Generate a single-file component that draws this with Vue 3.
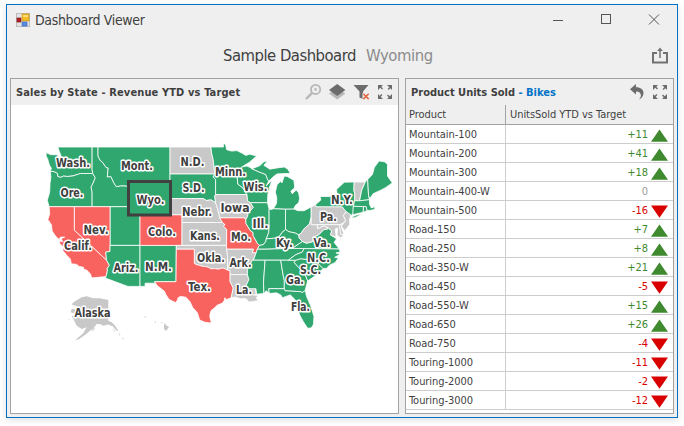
<script setup>
const RAD = Math.PI / 180
const mercator = (lat) => Math.log(Math.tan((45 + lat / 2) * RAD))
const project = (pair) => {
  const [lon, lat] = pair.split(',').map(Number)
  const x = 99 + 6.0 * (lon + 114.05)
  const y = 42 + 342 * (0.9838 - mercator(lat))
  return x.toFixed(1) + ',' + y.toFixed(1)
}

const ORWA = '-123.6,46.25 -123.2,46.15 -122.8,46.0 -122.76,45.66 -122.3,45.55 -121.8,45.7 -121.1,45.65 -120.2,45.72 -119.3,45.93 -118.98,46 -116.92,46'
const flip = (s) => s.split(' ').reverse().join(' ')
const IDMT = '-116.05,49 -116.05,48 -115.7,47.5 -115.3,47.3 -114.7,46.7 -114.35,46.65 -114.5,45.6 -113.9,45.65 -113.4,44.9 -113.0,44.45 -112.3,44.55 -111.5,44.55 -111.05,44.47'
const OKTX = '-94.48,33.64 -95.1,33.9 -95.5,33.9 -96.0,33.75 -96.6,33.85 -97.2,33.8 -97.6,34.0 -98.1,34.13 -98.6,34.15 -99.2,34.3 -99.7,34.4 -100,34.56 -100,36.5 -103,36.5'
const MNWI = '-92.1,46.75 -92.3,46.1 -92.85,45.6 -92.75,44.75 -91.9,44.3 -91.22,43.5'
const IAIL = '-90.64,42.5 -90.15,41.9 -91.05,41.2 -91.1,40.8 -91.4,40.4'
const MOIL = '-91.4,40.4 -91.4,39.9 -90.7,39.0 -90.2,38.7 -90.2,38.3 -89.5,37.3 -89.15,37'
const OHIO_S = '-84.8,39.1 -84.2,38.8 -83.2,38.65 -82.6,38.4'
const KYIN = '-88,37.9 -87.6,37.9 -86.8,37.95 -86,38 -85.4,38.7 -84.8,39.1'
const WVVA = '-77.7,39.32 -77.8,39.15 -78.4,39.1 -79.3,38.4 -79.9,38.2 -80.3,37.5 -81.3,37.3 -81.97,37.53'
const WVOH = '-82.6,38.4 -82.2,38.6 -81.7,39.2 -80.8,39.8 -80.52,40.64'

const source = [
  ['up', `-124.7,48.38 -123.9,48.15 -123.1,48.15 -122.75,48.1 -122.6,47.3 -122.35,47.6 -122.2,48.0 -122.5,48.5 -122.75,49 -117.03,49 -117.04,46.42 -116.92,46 ${flip(ORWA)} -124.05,46.27 -123.8,46.6 -124.1,46.9 -124.3,47.3 -124.4,47.6 -124.7,48.0`],
  ['up', `-124.0,46.2 ${ORWA} -116.5,45.5 -116.85,44.9 -117.2,44.4 -117.03,43.8 -117.03,42 -124.2,42 -124.5,42.8 -124.1,43.8 -124.05,44.8 -123.9,45.6`],
  ['up', `-117.03,49 ${IDMT} -111.05,42 -117.03,42 -117.03,43.8 -117.2,44.4 -116.85,44.9 -116.5,45.5 -116.92,46 -117.04,46.42`],
  ['up', `-104.05,49 -104.05,45 -111.05,45 ${flip(IDMT)}`],
  ['up', '-114.05,42 -111.05,42 -111.05,41 -109.05,41 -109.05,37 -114.05,37'],
  ['down', '-120,42 -114.05,42 -114.05,36.2 -114.75,36.1 -114.63,35 -120,39'],
  ['down', '-124.2,42 -120,42 -120,39 -114.63,35 -114.15,34.3 -114.5,33.9 -114.5,33.4 -114.72,32.72 -117.12,32.53 -117.3,33.1 -117.9,33.6 -118.4,33.75 -118.5,34.03 -119.2,34.15 -119.6,34.42 -120.5,34.5 -120.65,35.15 -121.3,35.7 -121.9,36.3 -121.8,36.8 -122.4,37.2 -122.5,37.6 -121.9,37.5 -122.2,37.9 -121.6,38.1 -122.3,38.1 -122.5,37.8 -123.0,38.1 -123.7,38.9 -123.8,39.7 -124.4,40.4 -124.1,41.1'],
  ['up', '-114.05,37 -109.05,37 -109.05,31.33 -111.07,31.33 -114.81,32.5 -114.72,32.72 -114.5,33.4 -114.5,33.9 -114.15,34.3 -114.63,35 -114.75,36.1 -114.05,36.2'],
  ['up', '-109.05,37 -103,37 -103.05,32 -106.6,32 -106.53,31.78 -108.2,31.78 -108.2,31.33 -109.05,31.33'],
  ['down', '-109.05,41 -102.05,41 -102.05,37 -109.05,37'],
  ['none', '-104.05,49 -97.23,49 -97.1,48.3 -96.85,47.6 -96.56,45.94 -104.05,45.94'],
  ['up', '-104.05,45.94 -96.56,45.94 -96.85,45.6 -96.45,45.3 -96.45,43.5 -96.6,43.3 -96.45,42.5 -97.2,42.85 -98,42.77 -98.5,43 -104.05,43'],
  ['none', '-104.05,43 -98.5,43 -98,42.77 -97.2,42.85 -96.45,42.5 -96.1,41.7 -95.85,41 -95.77,40.59 -95.3,40 -102.05,40 -102.05,41 -104.05,41'],
  ['none', '-102.05,40 -95.3,40 -94.9,39.75 -95.1,39.5 -94.6,39.1 -94.62,37 -102.05,37'],
  ['none', `-103,37 -94.62,37 -94.43,35.4 ${OKTX}`],
  ['down', `-103,36.5 ${flip(OKTX)} -94.04,33.55 -94.04,31.99 -93.5,31.1 -93.7,30.3 -93.85,29.7 -94.7,29.4 -94.9,29.7 -95.0,29.3 -95.3,28.9 -96.2,28.6 -96.5,28.3 -97.2,27.8 -97.4,27.2 -97.4,26.8 -97.15,25.95 -98.2,26.05 -99.1,26.4 -99.5,27.5 -100.3,28.3 -100.7,29.1 -101.4,29.77 -102.3,29.88 -102.7,29.7 -102.8,29.35 -103.15,28.98 -104.2,29.45 -104.7,30.1 -105.0,30.65 -106.2,31.45 -106.6,32 -103.05,32`],
  ['up', `-97.23,49 -95.15,49 -95.15,49.38 -94.8,49.3 -94.6,48.7 -93.8,48.55 -92.9,48.6 -92.0,48.3 -91.4,48.07 -90.8,48.2 -89.6,48.0 -90.8,47.3 ${MNWI} -96.45,43.5 -96.45,45.3 -96.85,45.6 -96.56,45.94 -96.85,47.6 -97.1,48.3`],
  ['none', `-96.45,43.5 -91.22,43.5 -91.1,42.7 ${IAIL} -91.73,40.61 -95.77,40.59 -95.85,41 -96.1,41.7 -96.45,42.5 -96.6,43.3`],
  ['down', `-95.77,40.59 -91.73,40.61 ${MOIL} -89.5,36.5 -89.7,36 -90.37,36 -90.15,36.5 -94.62,36.5 -94.62,37 -94.6,39.1 -95.1,39.5 -94.9,39.75 -95.3,40`],
  ['none', '-94.62,36.5 -90.15,36.5 -90.37,36 -89.7,36 -90.1,35.1 -90.6,34.6 -91.15,33.7 -91.15,33 -94.04,33 -94.04,33.55 -94.48,33.64 -94.43,35.4'],
  ['none', '-94.04,33 -91.15,33 -90.9,32.3 -91.6,31 -89.73,31 -89.8,30.5 -89.6,30.2 -90.2,30.1 -89.3,30 -89.7,29.7 -89.1,29.05 -89.5,29.25 -90.1,29.15 -90.9,29.05 -91.3,29.5 -91.7,29.6 -92.3,29.55 -93.2,29.8 -93.85,29.7 -93.7,30.3 -93.5,31.1 -94.04,31.99'],
  ['up', `-91.2,46.87 -90.7,46.7 -90.4,46.55 -89.1,46.15 -88.1,45.9 -87.8,45.35 -87.6,45.1 -88.0,44.55 -87.05,45.25 -87.5,44.3 -87.75,43.5 -87.8,42.5 -90.64,42.5 -91.1,42.7 ${flip(MNWI)}`],
  ['up', `-87.8,42.5 -87.53,41.7 -87.53,39.35 -87.6,38.7 -88.0,37.9 -88.1,37.5 -88.5,37.1 ${flip(MOIL)} ${flip(IAIL)}`],
  ['up', `-87.53,41.7 -87.1,41.65 -86.8,41.76 -84.8,41.72 ${flip(KYIN)} -87.6,38.7 -87.53,39.35`],
  ['up', `-84.8,41.72 -83.45,41.73 -82.7,41.5 -81.7,41.5 -80.52,41.98 ${flip(WVOH)} ${flip(OHIO_S)}`],
  ['up', '-86.8,41.76 -86.3,42.4 -86.25,43.1 -86.5,43.8 -86.2,44.7 -85.6,45.1 -85.4,44.9 -85,45.7 -84.5,45.65 -83.4,45.2 -83.3,44.6 -83.3,44.3 -83.9,43.9 -83.7,43.6 -83.0,44.05 -82.6,43.7 -82.45,43 -82.6,42.5 -83.1,42.2 -83.45,41.73 -84.8,41.72'],
  ['up', '-90.4,46.55 -89.1,46.9 -88.4,47.35 -87.8,47.45 -88.4,46.95 -87.4,46.5 -86.2,46.65 -85,46.75 -84.4,46.5 -84.0,46.0 -84.9,46.0 -86.2,45.95 -86.7,45.7 -87.6,45.1 -87.8,45.35 -88.1,45.9 -89.1,46.15'],
  ['up', `-89.15,37 -88.5,37.1 -88.1,37.5 ${KYIN} ${OHIO_S} -82.5,37.95 -81.97,37.53 -83.68,36.6 -88.05,36.5 -89.5,36.5`],
  ['up', '-89.5,36.5 -88.05,36.5 -83.68,36.6 -81.68,36.59 -82,36.1 -83.1,35.75 -84.32,35 -90.3,35 -90.1,35.1 -89.7,36'],
  ['up', '-90.3,35 -88.2,35 -88.47,31.9 -88.4,30.3 -89.6,30.2 -89.73,31 -91.6,31 -90.9,32.3 -91.15,33 -91.15,33.7 -90.6,34.6'],
  ['up', '-88.2,35 -85.6,35 -85.18,32.87 -85.0,32.2 -85.0,31 -87.6,31 -87.5,30.3 -88.0,30.7 -88.4,30.3 -88.47,31.9'],
  ['up', '-85.6,35 -83.1,35 -83.35,34.7 -82.6,34.0 -81.5,33.0 -81.1,32.1 -81.4,31.2 -81.5,30.75 -82.05,30.4 -82.2,30.57 -84.86,30.7 -85.0,31 -85.0,32.2 -85.18,32.87'],
  ['up', '-87.6,31 -85,31 -84.86,30.7 -82.2,30.57 -82.05,30.4 -81.5,30.75 -81.3,29.9 -80.6,28.5 -80.05,26.9 -80.15,25.7 -80.5,25.2 -81.1,25.15 -81.8,26.1 -82.3,26.9 -82.75,27.8 -82.65,28.7 -83.3,29.5 -84,30.1 -85.3,29.7 -85.6,30.1 -86.3,30.4 -87.5,30.3'],
  ['up', '-83.1,35 -82.3,35.2 -81.05,35.1 -80.8,34.82 -79.67,34.8 -78.55,33.86 -79.2,33.2 -80.4,32.5 -81.1,32.1 -81.5,33 -82.6,34 -83.35,34.7'],
  ['up', '-84.32,35 -83.1,35.75 -82,36.1 -81.68,36.59 -75.87,36.55 -75.7,36.1 -76.4,36.0 -75.7,35.8 -76.6,35.4 -76.0,35.3 -76.5,34.7 -77.5,34.3 -77.95,33.87 -78.55,33.86 -79.67,34.8 -80.8,34.82 -81.05,35.1 -82.3,35.2 -83.1,35'],
  ['up', `-83.68,36.6 ${flip(WVVA)} -77.1,38.9 -77.3,38.4 -76.3,37.9 -76.7,37.4 -76.3,37 -75.87,36.55`],
  ['none', `${WVOH} -80.52,39.72 -79.48,39.72 -79.48,39.2 -78.4,39.6 ${WVVA} -82.5,37.95`],
  ['none', '-80.52,41.98 -79.76,42.27 -79.76,42 -75.35,42 -74.7,41.36 -75.15,40.9 -74.75,40.2 -75.5,39.8 -75.79,39.72 -80.52,39.72'],
  ['up', '-79.76,42.27 -78.9,42.85 -79.05,43.27 -77.5,43.25 -76.2,43.55 -76.3,44.1 -75.0,44.98 -73.35,45 -73.4,44 -73.25,43.6 -73.27,42.75 -73.5,42.05 -73.5,41.2 -73.9,40.85 -74.7,41.36 -75.35,42 -79.76,42'],
  ['up', '-74,40.6 -73,40.95 -72,41.05 -73.3,40.6'],
  ['none', '-73.35,45 -71.5,45 -72.1,44 -72.45,42.73 -73.27,42.75 -73.25,43.6 -73.4,44'],
  ['up', '-71.5,45 -71.1,45.3 -70.95,43.3 -70.8,42.87 -72.45,42.73 -72.1,44'],
  ['up', '-71.1,45.3 -70.3,45.9 -70.0,46.7 -69.2,47.45 -68.3,47.35 -67.8,47.07 -67.8,45.7 -67,44.9 -68.2,44.3 -69,44 -70.2,43.6 -70.7,43.05 -70.95,43.3'],
  ['up', '-73.27,42.75 -72.45,42.73 -70.8,42.87 -70.8,42.3 -70.5,41.85 -69.9,42.0 -69.95,41.65 -70.6,41.55 -71.2,41.5 -71.38,42.02 -73.5,42.05'],
  ['up', '-73.5,42.05 -71.8,42.02 -71.85,41.32 -73.6,41'],
  ['up', '-71.8,42.02 -71.38,42.02 -71.2,41.5 -71.85,41.32'],
  ['none', '-74.7,41.36 -73.9,41 -74.1,40.45 -74.1,39.75 -74.9,38.95 -75.5,39.5 -75.15,39.9 -74.75,40.2 -75.15,40.9'],
  ['none', '-79.48,39.72 -75.79,39.72 -75.6,38.46 -75.05,38.45 -75.6,38 -76.2,38.4 -76.1,39.3 -76.5,39.2 -76.4,38.4 -76.4,38.1 -77.3,38.4 -77.1,38.9 -77.7,39.32 -78.4,39.6 -79.48,39.2'],
  ['none', '-75.79,39.72 -75.5,39.8 -75.4,39.2 -75.05,38.45 -75.6,38.46'],
  ['none', '-75.3,38 -75.6,37.9 -76.0,37.2'],
  ['up', '-111.05,45 -104.05,45 -104.05,41 -111.05,41'],
]
const states = source.map(([kind, pts]) => ({ kind, points: pts.split(' ').map(project).join(' ') }))

const labels = [
  ['Wash.', 73, 163, 34], ['Mont.', 137, 166, 32], ['N.D.', 192.5, 162, 24], ['Minn.', 230.5, 172, 31],
  ['Ore.', 72, 193, 23], ['Wyo.', 150.5, 200, 28], ['S.D.', 193.5, 188, 22], ['Wis.', 255.5, 187, 24],
  ['Nebr.', 197, 212, 30], ['Iowa', 235, 208, 29], ['Nev.', 96, 229.5, 25], ['Colo.', 162, 232, 28],
  ['Calif.', 78, 246, 28], ['Kans.', 205, 236, 30], ['Mo.', 241, 237, 20], ['Ill.', 260.5, 224, 16],
  ['Ariz.', 126, 268, 25], ['N.M.', 158.5, 267, 27], ['Okla.', 211, 258, 28], ['Ark.', 240.5, 263, 22],
  ['Tex.', 199.5, 287, 23], ['La.', 244, 290, 16], ['Ky.', 284.5, 243, 17], ['Va.', 322, 243, 17],
  ['N.C.', 318.5, 258, 23], ['S.C.', 310.5, 270, 21], ['Ga.', 295, 279.5, 18], ['Fla.', 300.5, 307, 19],
  ['N.Y.', 342, 200, 22], ['Pa.', 328.5, 217, 17], ['Alaska', 92.5, 312.5, 36],
].map(([text, x, y, w]) => ({ text, x: x - 11, y: y - 101, w }))

const rows = [
  ['Mountain-100', 11], ['Mountain-200', 41], ['Mountain-300', 18], ['Mountain-400-W', 0],
  ['Mountain-500', -16], ['Road-150', 7], ['Road-250', 8], ['Road-350-W', 21], ['Road-450', -5],
  ['Road-550-W', 15], ['Road-650', 26], ['Road-750', -4], ['Touring-1000', -11],
  ['Touring-2000', -2], ['Touring-3000', -12],
].map(([name, v]) => ({ name, text: v > 0 ? '+' + v : String(v), kind: v > 0 ? 'up' : v < 0 ? 'down' : 'none' }))
</script>

<template>
  <div class="screen">
    <div class="window">
      <header class="titlebar">
        <svg class="app-icon" width="14" height="14" viewBox="0 0 14 14">
          <rect x=".5" y=".5" width="13" height="13" fill="#e4e4e4" stroke="#bdbdbd" />
          <path d="M5.5 1v12M1 8.500h12" stroke="#fff" />
          <rect x="1" y="5" width="4" height="4" fill="#b51f24" stroke="#84151a" stroke-width=".7" />
          <rect x="6" y="1" width="7" height="7" fill="#f5bd25" stroke="#c8921b" stroke-width=".8" />
          <path d="M7 2h5v2h-5z" fill="#ffdf78" />
          <rect x="6" y="9" width="5" height="4" fill="#5a8de0" stroke="#3c68bd" stroke-width=".7" />
        </svg>
        <span class="app-name">Dashboard Viewer</span>
        <svg class="controls" width="108" height="12" viewBox="0 0 108 12" fill="none" stroke="#555">
          <path d="M0 6.500h10" />
          <rect x="48.500" y=".5" width="9" height="9" />
          <path d="M96 .5l10 10M106 .5l-10 10" />
        </svg>
      </header>
      <div class="heading">
        <span class="heading-title">Sample Dashboard</span>
        <span class="heading-state">Wyoming</span>
        <svg class="share" width="16" height="17" viewBox="0 0 16 17" fill="none" stroke="#727272">
          <path d="M5 6H1v9.500h14V6h-4" stroke-width="2" />
          <path d="M8 11V2" stroke-width="1.500" />
          <path d="M5.200 4L8 .6 10.800 4z" fill="#727272" stroke="none" />
        </svg>
      </div>
      <main class="panels">
        <section class="panel map-panel">
          <div class="panel-head">
            <h2>Sales by State - Revenue YTD vs Target</h2>
            <svg class="tools" width="90" height="18" viewBox="0 0 90 18">
              <g fill="none" stroke="#b7b7b7">
                <circle cx="10.600" cy="6.400" r="4.600" stroke-width="1.800" />
                <path d="M7.200 9.800L1 16" stroke-width="2.400" />
                <circle cx="10.600" cy="6.400" r="1.300" fill="#b7b7b7" stroke="none" />
              </g>
              <path d="M24 10.500l8.200-5 8.200 5-8.200 6z" fill="#b9b9b9" />
              <path d="M24 7l8.200-6 8.200 6-8.200 6z" fill="#6c6c6c" />
              <path d="M48.500 2h15l-5.500 6.500v7.500l-3.500-1.500V8.500z" fill="#6c6c6c" />
              <path d="M57.500 10h7v7h-7z" fill="#efefef" />
              <path d="M58.300 10.700l5.400 5.400M63.700 10.700l-5.400 5.400" stroke="#e06845" stroke-width="1.600" />
              <g fill="#6c6c6c">
                <path d="M73 2h5l-1.700 1.700 1.700 1.700-1 1-1.700-1.700L73 7z" />
                <path d="M87 2v5l-1.700-1.700L83.600 7l-1-1 1.700-1.700L82 2z" />
                <path d="M73 16v-5l1.700 1.700 1.700-1.700 1 1-1.700 1.700L78 16z" />
                <path d="M87 16h-5l1.700-1.700-1.700-1.700 1-1 1.700 1.700L87 11z" />
              </g>
            </svg>
          </div>
          <svg class="map" width="387" height="308" viewBox="0 0 387 308">
            <polygon v-for="(s, i) in states" :key="i" :class="['state', s.kind]" :points="s.points" />
            <g class="islands">
              <path d="M60.700 199L64 196.300 70.700 192.300 75.700 191.300 82.300 193.300H89L97.300 195V215.700L100.700 217.300 104 220.500 107.300 225.700 106 226 102 221.500 97.300 219.500 92.300 220.700 89 219H85.700L84 221.300 79 225.700 74 230 68.300 234 64 235.500 72.300 228 75.700 222.300 70.700 224 65.700 220.700 62.300 214 60.700 211.300 65.700 209 59.700 207.300 60.700 204H65L66.300 201.300 61.700 200z" />
              <path d="M80 223l3-1 1 2-3 2.500zM102 222l2 4-1 1zM107.500 227l2 3-1 1zM111 232l2 2-1.500 .5zM51 236l4-1.500zM40 212l3 .5zM57 214l2 .5-1 1z" opacity=".7" />
              <path d="M153 218l2 1-1 2zM143 217l2-1v2zM133 212l2-1v2zM149 217h3v1z" opacity=".7" />
              <path d="M153 219l5 3-3 4-2-2z" />
            </g>
            <rect class="selection" x="117.500" y="76.500" width="42" height="33.500" />
            <text v-for="l in labels" :key="l.text" class="label" :x="l.x" :y="l.y" :textLength="l.w" lengthAdjust="spacingAndGlyphs">{{ l.text }}</text>
          </svg>
        </section>
        <section class="panel grid-panel">
          <div class="panel-head">
            <h2>Product Units Sold <span class="accent">- Bikes</span></h2>
            <svg class="tools" width="42" height="18" viewBox="0 0 42 18">
              <path d="M2 6.200L8 1v3.200c5 0 7.500 2.400 7.500 6 0 3-2 5-4.500 6.300 1.800-2 2.400-3.700 1.600-5.400C12 9.200 10.500 8.500 8 8.500V11.400z" fill="#6c6c6c" />
              <g fill="#6c6c6c">
                <path d="M25 2h5l-1.700 1.700 1.700 1.700-1 1-1.700-1.700L25 7z" />
                <path d="M39 2v5l-1.700-1.700L35.600 7l-1-1 1.700-1.700L34 2z" />
                <path d="M25 16v-5l1.700 1.700 1.700-1.700 1 1-1.700 1.700L30 16z" />
                <path d="M39 16h-5l1.700-1.700-1.700-1.700 1-1 1.700 1.700L39 11z" />
              </g>
            </svg>
          </div>
          <div class="row head"><span class="name">Product</span><span class="col">UnitsSold YTD vs Target</span></div>
          <div v-for="r in rows" :key="r.name" class="row">
            <span class="name">{{ r.name }}</span>
            <span :class="['value', r.kind]">
              <span class="num">{{ r.text }}</span>
              <svg width="17" height="13" viewBox="0 0 17 13">
                <path v-if="r.kind === 'up'" d="M0 12.700L8.500 .4 17 12.700z" fill="#3f892f" />
                <path v-if="r.kind === 'down'" d="M0 .4h17L8.500 12.700z" fill="#d90000" />
              </svg>
            </span>
          </div>
          <div class="tail"><span class="name"></span></div>
        </section>
      </main>
    </div>
  </div>
</template>

<style>
body { background: #fff; overflow: hidden; }
</style>

<style scoped>
* { box-sizing: border-box; }
.screen { width: 684px; height: 426px; padding: 4px 6px; font-family: "DejaVu Sans Condensed", "DejaVu Sans", sans-serif; font-stretch: condensed; color: #3f3f3f; }
.window { width: 672px; height: 414px; padding: 0 3px; border: 1px solid #0173c7; background: #efefef; box-shadow: 0 2px 7px rgba(0, 0, 0, .13); display: flex; flex-direction: column; }
.titlebar { height: 30px; padding: 0 13px 0 6px; display: flex; align-items: center; }
.app-icon { margin-top: -1px; }
.app-name { margin-left: 5px; font-size: 14px; letter-spacing: -.35px; white-space: nowrap; }
.controls { margin: -1px 0 0 auto; }
.heading { height: 43px; padding: 0 6px 2px 213px; display: flex; align-items: center; font-size: 16.500px; white-space: nowrap; }
.heading-title { letter-spacing: -.5px; }
.heading-state { margin-left: 10px; color: #8b8b8b; letter-spacing: -.4px; }
.share { margin: -1px 0 0 auto; }
.panels { display: flex; gap: 6px; height: 336px; }
.panel { border: 1px solid #a3a3a3; background: #fff; height: 336px; }
.map-panel { width: 389px; }
.grid-panel { width: 269px; }
.panel-head { height: 26px; padding: 0 3px 0 5px; background: #efefef; display: flex; align-items: center; justify-content: space-between; }
h2 { margin: 0; font-size: 11px; font-weight: bold; white-space: nowrap; letter-spacing: .12px; }
.grid-panel h2 { letter-spacing: 0; }
.accent { color: #0173c7; }
.map { display: block; }
.state { stroke: #fff; stroke-width: .8; stroke-linejoin: round; }
.state.up { fill: #2fa76f; }
.state.down { fill: #f8625f; }
.state.none { fill: #c8c8c8; }
.islands { fill: #c8c8c8; }
.selection { fill: none; stroke: #414141; stroke-width: 3; }
.label { font-size: 11.500px; font-weight: bold; text-anchor: middle; fill: #404040; stroke: #fff; stroke-width: 3px; stroke-linejoin: round; paint-order: stroke; }
.row { height: 19px; display: flex; border-bottom: 1px solid #cdcdcd; font-size: 11px; letter-spacing: -.05px; line-height: 20px; white-space: nowrap; }
.row.head { height: 20px; background: #efefef; border-color: #a3a3a3; }
.name { width: 100px; height: 100%; padding-left: 3px; border-right: 1px solid #cdcdcd; }
.head .name { border-color: #a3a3a3; }
.col { padding-left: 4px; }
.value { flex: 1; display: flex; justify-content: flex-end; align-items: flex-end; padding: 0 5px 0 0; gap: 3px; }
.value svg { margin-bottom: 1px; }
.num { line-height: 17px; }
.value.up { color: #3f892f; }
.value.down { color: #d90000; }
.value.none { color: #9b9b9b; }
.tail { display: flex; height: 3px; }
.tail .name { border-color: #fff; }
</style>
